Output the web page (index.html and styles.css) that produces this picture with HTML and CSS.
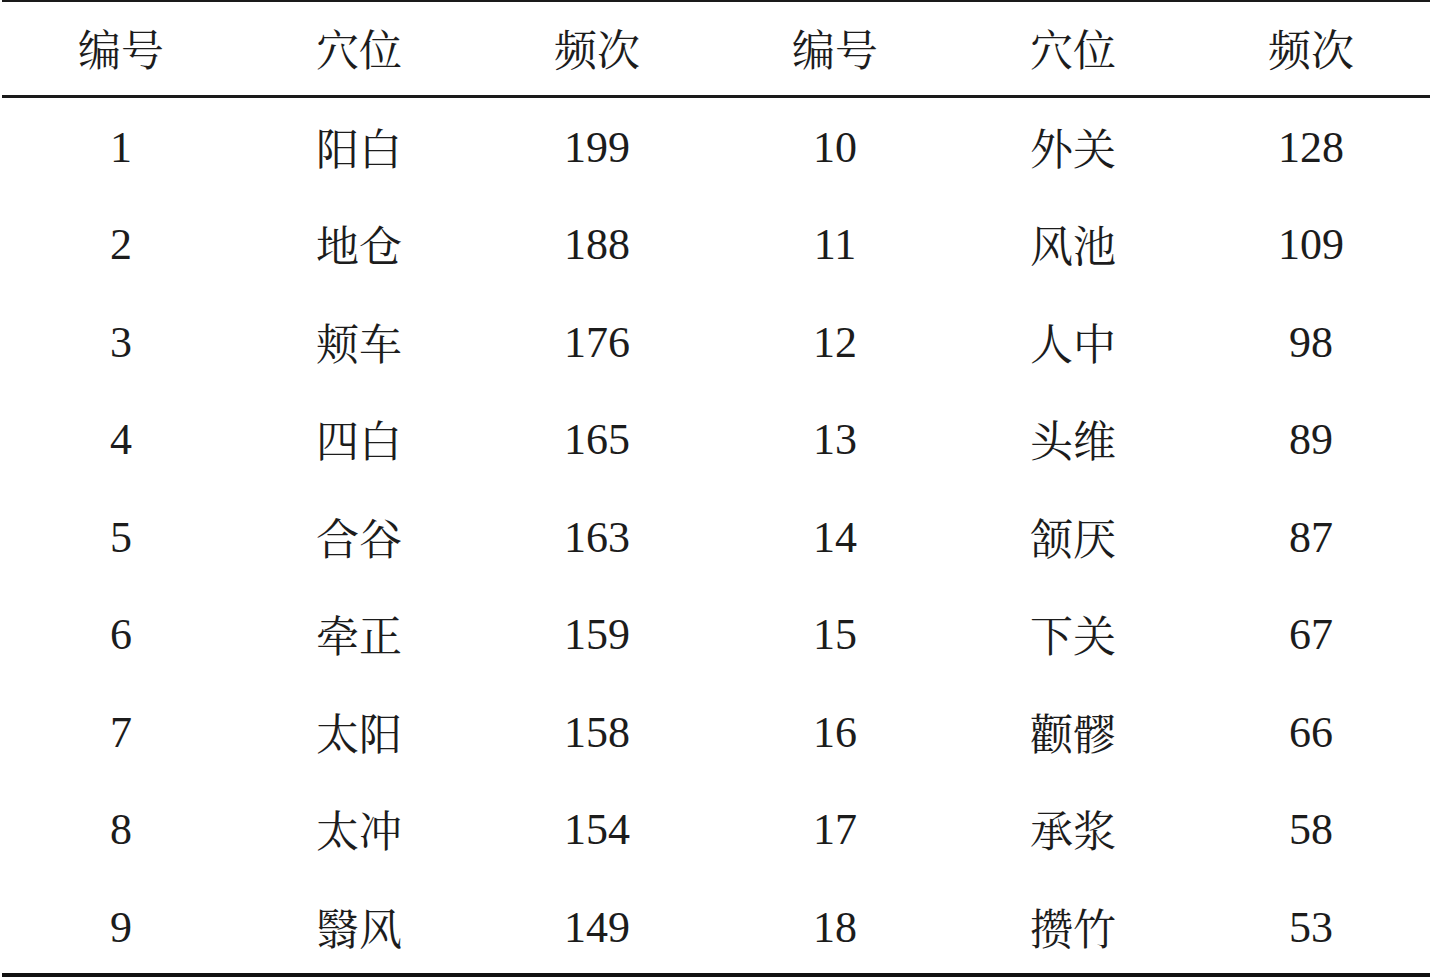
FILE: index.html
```html
<!DOCTYPE html>
<html>
<head>
<meta charset="utf-8">
<title>穴位频次</title>
<link rel="stylesheet" href="styles.css">
</head>
<body>
<div class="freq">
  <div class="row head">
    <div class="cell cjk">编号</div><div class="cell cjk">穴位</div><div class="cell cjk">频次</div><div class="cell cjk">编号</div><div class="cell cjk">穴位</div><div class="cell cjk">频次</div>
  </div>
  <div class="row"><div class="cell num">1</div><div class="cell cjk">阳白</div><div class="cell num">199</div><div class="cell num">10</div><div class="cell cjk">外关</div><div class="cell num">128</div></div>
  <div class="row"><div class="cell num">2</div><div class="cell cjk">地仓</div><div class="cell num">188</div><div class="cell num">11</div><div class="cell cjk">风池</div><div class="cell num">109</div></div>
  <div class="row"><div class="cell num">3</div><div class="cell cjk">颊车</div><div class="cell num">176</div><div class="cell num">12</div><div class="cell cjk">人中</div><div class="cell num">98</div></div>
  <div class="row"><div class="cell num">4</div><div class="cell cjk">四白</div><div class="cell num">165</div><div class="cell num">13</div><div class="cell cjk">头维</div><div class="cell num">89</div></div>
  <div class="row"><div class="cell num">5</div><div class="cell cjk">合谷</div><div class="cell num">163</div><div class="cell num">14</div><div class="cell cjk">颔厌</div><div class="cell num">87</div></div>
  <div class="row"><div class="cell num">6</div><div class="cell cjk">牵正</div><div class="cell num">159</div><div class="cell num">15</div><div class="cell cjk">下关</div><div class="cell num">67</div></div>
  <div class="row"><div class="cell num">7</div><div class="cell cjk">太阳</div><div class="cell num">158</div><div class="cell num">16</div><div class="cell cjk">颧髎</div><div class="cell num">66</div></div>
  <div class="row"><div class="cell num">8</div><div class="cell cjk">太冲</div><div class="cell num">154</div><div class="cell num">17</div><div class="cell cjk">承浆</div><div class="cell num">58</div></div>
  <div class="row last"><div class="cell num">9</div><div class="cell cjk">翳风</div><div class="cell num">149</div><div class="cell num">18</div><div class="cell cjk">攒竹</div><div class="cell num">53</div></div>
</div>
</body>
</html>
```
FILE: styles.css
```css
html, body {
  margin: 0;
  padding: 0;
  background: #ffffff;
}
.freq {
  margin-left: 2px;
  width: 1428px;
  color: #1c1c1c;
  border-top: 2px solid #1a1a1a;
  border-bottom: 4px solid #111111;
}
.row {
  display: grid;
  grid-template-columns: repeat(6, 1fr);
  align-items: start;
  height: 97.5px;
}
.row.head {
  height: 93px;
  border-bottom: 3px solid #1a1a1a;
}
.row.last {
  height: 95px;
}
.cell {
  text-align: center;
  line-height: 1;
}
.cjk {
  font-family: "Noto Serif CJK SC", serif;
  font-size: 43px;
  padding-top: 26.5px;
}
.head .cjk {
  padding-top: 24px;
}
.num {
  font-family: "Liberation Serif", serif;
  font-size: 44px;
  padding-top: 27.7px;
}
```
